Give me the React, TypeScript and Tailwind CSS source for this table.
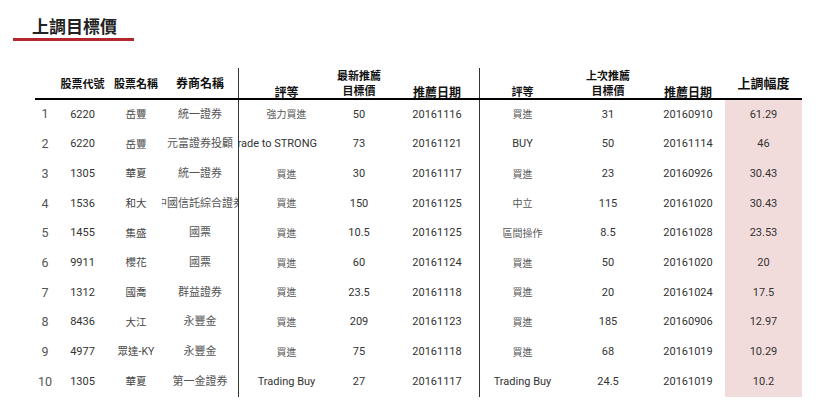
import React from 'react'

const rows = [
  { no: 1, code: '6220', name: '岳豐', broker: '統一證券', rating: '強力買進', target: '50', date: '20161116', prevRating: '買進', prevTarget: '31', prevDate: '20160910', pct: '61.29' },
  { no: 2, code: '6220', name: '岳豐', broker: '元富證券投顧', rating: 'Upgrade to STRONG', target: '73', date: '20161121', prevRating: 'BUY', prevTarget: '50', prevDate: '20161114', pct: '46' },
  { no: 3, code: '1305', name: '華夏', broker: '統一證券', rating: '買進', target: '30', date: '20161117', prevRating: '買進', prevTarget: '23', prevDate: '20160926', pct: '30.43' },
  { no: 4, code: '1536', name: '和大', broker: '中國信託綜合證券', rating: '買進', target: '150', date: '20161125', prevRating: '中立', prevTarget: '115', prevDate: '20161020', pct: '30.43' },
  { no: 5, code: '1455', name: '集盛', broker: '國票', rating: '買進', target: '10.5', date: '20161125', prevRating: '區間操作', prevTarget: '8.5', prevDate: '20161028', pct: '23.53' },
  { no: 6, code: '9911', name: '櫻花', broker: '國票', rating: '買進', target: '60', date: '20161124', prevRating: '買進', prevTarget: '50', prevDate: '20161020', pct: '20' },
  { no: 7, code: '1312', name: '國喬', broker: '群益證券', rating: '買進', target: '23.5', date: '20161118', prevRating: '買進', prevTarget: '20', prevDate: '20161024', pct: '17.5' },
  { no: 8, code: '8436', name: '大江', broker: '永豐金', rating: '買進', target: '209', date: '20161123', prevRating: '買進', prevTarget: '185', prevDate: '20160906', pct: '12.97' },
  { no: 9, code: '4977', name: '眾達-KY', broker: '永豐金', rating: '買進', target: '75', date: '20161118', prevRating: '買進', prevTarget: '68', prevDate: '20161019', pct: '10.29' },
  { no: 10, code: '1305', name: '華夏', broker: '第一金證券', rating: 'Trading Buy', target: '27', date: '20161117', prevRating: 'Trading Buy', prevTarget: '24.5', prevDate: '20161019', pct: '10.2' },
]

const cols = 'grid grid-cols-[20px_55px_52px_76px_96px_50px_95px_86px_86px_74px_77px]'
const cjk = 'text-[#555] text-[10px]'

const App = () => {
  return (
    <div className="w-[820px] h-[412px] bg-white pt-[13px] font-['Roboto','Noto_Sans_CJK_TC',sans-serif] text-[#333] overflow-hidden">
      {/* Title */}
      <div className="ml-[13px] w-[121px] border-b-[3px] border-[#b3262c] pl-[19px]">
        <h1 className="text-[17px] leading-[25px] font-semibold text-[#222] font-['Noto_Sans_CJK_TC',sans-serif]">上調目標價</h1>
      </div>

      {/* Table */}
      <div className="ml-[35px] mt-[27px] w-[767px]">
        {/* Header */}
        <div className={`${cols} h-[30px] text-[11px] font-semibold text-[#111] font-['Noto_Sans_CJK_TC',sans-serif]`}>
          <div />
          <div className="flex items-center justify-center whitespace-nowrap">股票代號</div>
          <div className="flex items-center justify-center whitespace-nowrap">股票名稱</div>
          <div className="flex items-center justify-center whitespace-nowrap text-[12px]">券商名稱</div>
          <div className="flex items-end justify-center border-l border-[#333] leading-[13px] text-[12px]">評等</div>
          <div className="flex flex-col items-center justify-end leading-[15px]">
            <span>最新推薦</span>
            <span>目標價</span>
          </div>
          <div className="flex items-end justify-center pl-[11px] leading-[13px] text-[12px]">推薦日期</div>
          <div className="flex items-end justify-center border-l border-[#333] leading-[13px]">評等</div>
          <div className="flex flex-col items-center justify-end leading-[15px]">
            <span>上次推薦</span>
            <span>目標價</span>
          </div>
          <div className="flex items-end justify-center leading-[13px] text-[12px]">推薦日期</div>
          <div className="flex items-center justify-center text-[13px]">上調幅度</div>
        </div>
        <div className="h-[2px] bg-black" />

        {/* Body */}
        {rows.map((r) => (
          <div key={r.no} className={`${cols} h-[29.7px] text-[11px]`}>
            <div className="flex items-center justify-center text-[12.5px] text-[#555]">{r.no}</div>
            <div className="flex items-center justify-center">{r.code}</div>
            <div className="flex items-center justify-center whitespace-nowrap text-[10.5px] text-[#444]">{r.name}</div>
            <div className="flex items-center justify-center overflow-hidden whitespace-nowrap text-[#555]">
              <span className="shrink-0">{r.broker}</span>
            </div>
            <div className="flex items-center border-l border-[#333] overflow-hidden whitespace-nowrap">
              {r.no === 2 ? (
                <div className="flex w-full justify-end pr-[17px]">
                  <span className="shrink-0">{r.rating}</span>
                </div>
              ) : (
                <div className={`w-full text-center ${/[A-Za-z]/.test(r.rating) ? '' : cjk}`}>{r.rating}</div>
              )}
            </div>
            <div className="flex items-center justify-center">{r.target}</div>
            <div className="flex items-center justify-center pl-[11px]">{r.date}</div>
            <div className={`flex items-center justify-center border-l border-[#333] whitespace-nowrap ${/[A-Za-z]/.test(r.prevRating) ? '' : cjk}`}>{r.prevRating}</div>
            <div className="flex items-center justify-center">{r.prevTarget}</div>
            <div className="flex items-center justify-center">{r.prevDate}</div>
            <div className="flex items-center justify-center bg-[#f2dcdb]">{r.pct}</div>
          </div>
        ))}
      </div>
    </div>
  )
}

export default App
